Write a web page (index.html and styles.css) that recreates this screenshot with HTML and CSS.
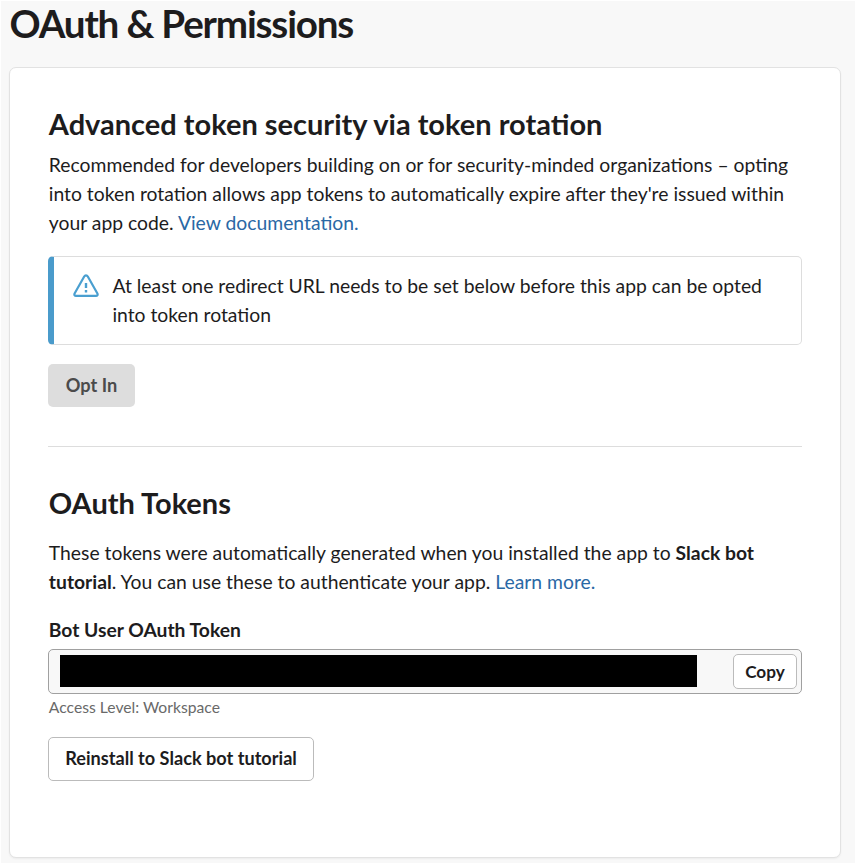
FILE: index.html
```html
<!DOCTYPE html>
<html lang="en">
<head>
<meta charset="utf-8">
<title>OAuth &amp; Permissions</title>
<link rel="stylesheet" href="styles.css">
</head>
<body>
<main class="page">
  <h1>OAuth &amp; Permissions</h1>
  <div class="card">
    <section>
      <h2>Advanced token security via token rotation</h2>
      <p class="intro">Recommended for developers building on or for security-minded organizations – opting<br>into token rotation allows app tokens to automatically expire after they're issued within<br>your app code. <a>View documentation.</a></p>
      <div class="alert">
        <svg class="alert-icon" viewBox="0 0 26 24" fill="none" stroke="#4a9fd0" stroke-width="2.2" stroke-linecap="round" stroke-linejoin="round"><path d="M11.2 2.5 1.6 19.5c-.6 1.2 0 2.4 1.4 2.4h20c1.4 0 2-1.2 1.4-2.4L14.8 2.5c-.8-1.4-2.800-1.400-3.600 0Z"/><path d="M13 9v5M13 16v2.400" stroke-width="2.400" stroke-linecap="butt"/></svg>
        <p>At least one redirect URL needs to be set below before this app can be opted<br>into token rotation</p>
      </div>
      <button class="opt-in">Opt In</button>
    </section>
    <hr>
    <section>
      <h2>OAuth Tokens</h2>
      <p class="token-text">These tokens were automatically generated when you installed the app to <b>Slack bot<br>tutorial</b>. You can use these to authenticate your app. <a>Learn more.</a></p>
      <h3>Bot User OAuth Token</h3>
      <div class="field"><div class="redacted"></div><button class="copy">Copy</button></div>
      <p class="access">Access Level: Workspace</p>
      <button class="reinstall">Reinstall to Slack bot tutorial</button>
    </section>
  </div>
</main>
</body>
</html>
```

FILE: styles.css
```css
* { box-sizing: border-box; }
body { margin: 0; background: #fff; color: #1d1c1d; font: 19.34px/29px Lato, sans-serif; }
h1, h2, h3, p { margin: 0; }
button { font: inherit; font-weight: 700; color: #1d1c1d; padding: 0; display: block; }
a { color: #2a68a5; }
.page { width: 854px; height: 862px; margin: 1px 0 0 1px; padding: 0 14px 0 8px; overflow: hidden; background: #f8f8f8; }
h1 { height: 66px; padding-left: .5px; font-size: 38.6px; line-height: 45px; letter-spacing: -1.17px; }
.card { height: 791px; padding: 37px 38px 0; background: #fff; border: 1px solid #e2e2e2; border-radius: 7px; box-shadow: 0 1px 2px rgba(0, 0, 0, .05); }
h2, h3, .intro, .token-text, .access { padding-left: .8px; white-space: nowrap; }
h2 { font-size: 29px; line-height: 38px; height: 45px; }
.alert { display: flex; height: 89px; margin: 19px 0 19px; padding: 14px 0 0 19px; border: 1px solid #ddd; border-left: 6px solid #4a9bcb; border-radius: 5px; white-space: nowrap; }
.alert-icon { flex: none; width: 26px; height: 24px; margin: 3px 13.4px 0 0; }
.opt-in { width: 87px; height: 43px; background: #ddd; color: #4b4b4b; border: 0; border-radius: 5px; font-size: 18.2px; }
hr { height: 1px; margin: 39px 0 37px; border: 0; background: #ddd; }
.token-text { margin-top: 9px; }
h3 { margin-top: 19px; font-size: 19.3px; line-height: 29px; }
.field { display: flex; align-items: flex-start; justify-content: space-between; height: 45px; margin-top: 5px; padding: 4px 4px 0 11px; background: #f8f8f8; border: 1px solid #a0a0a0; border-radius: 5px; }
.redacted { width: 637px; height: 32px; margin-top: 1px; background: #000; }
.copy { width: 64px; height: 35px; font-size: 17.2px; background: #fff; border: 1px solid #bbb; border-radius: 5px; }
.access { height: 28px; margin-bottom: 15px; font-size: 15.7px; line-height: 26px; color: #696969; }
.reinstall { width: 266px; height: 44px; padding-bottom: 2px; font-size: 18.15px; background: #fff; border: 1px solid #bbb; border-radius: 5px; }
```
